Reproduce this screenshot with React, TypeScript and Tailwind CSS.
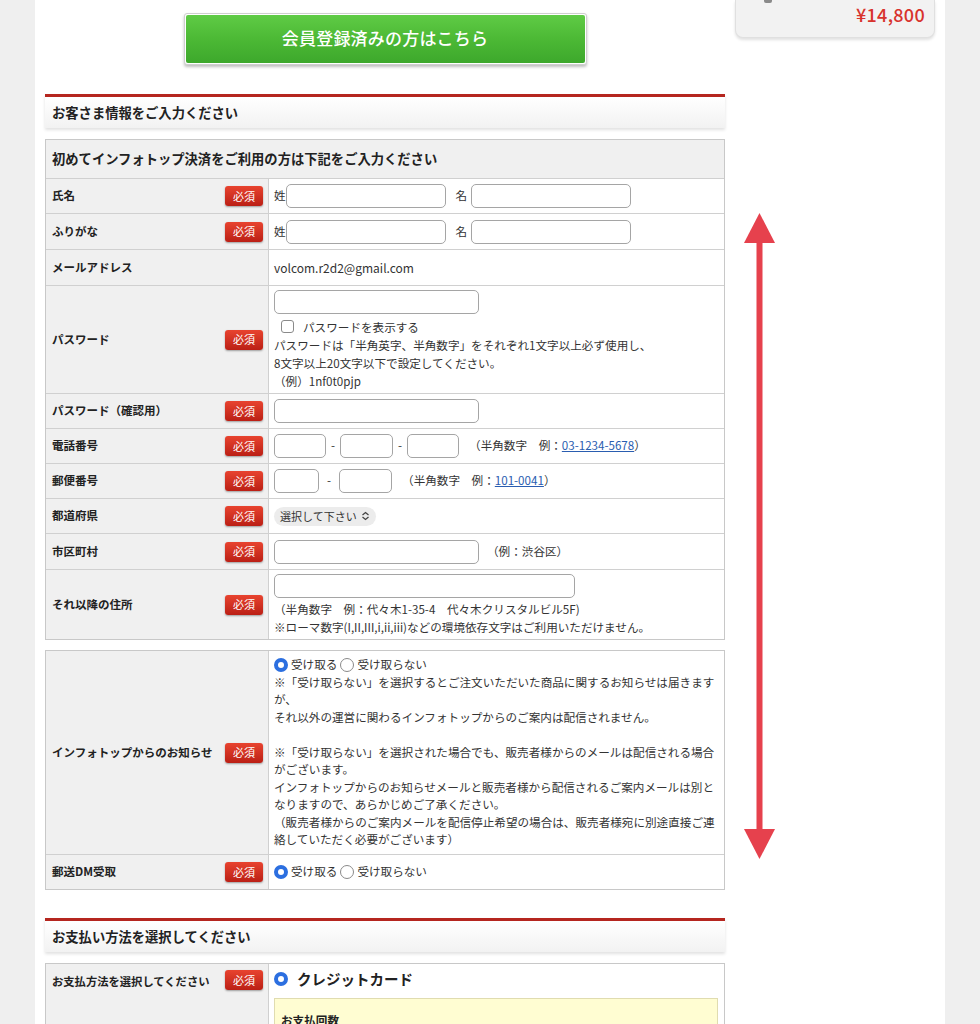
import React from "react";

const jp = { fontFamily: '"Noto Sans CJK JP", "Noto Sans", sans-serif' };

function Badge() {
  return (
    <span className="inline-flex items-center justify-center w-[38px] h-[20px] rounded-[3px] bg-gradient-to-b from-[#e8432f] to-[#bb1f15] text-white text-[11px] shadow-[0_1px_2px_rgba(0,0,0,0.35)] shrink-0">
      必須
    </span>
  );
}

function Input({ className }: { className: string }) {
  return <span className={`inline-block h-[24px] rounded-[5px] border border-[#a5a5a5] bg-white ${className}`} />;
}

function Radio({ checked }: { checked?: boolean }) {
  return checked ? (
    <span className="inline-block w-[14px] h-[14px] rounded-full border-[4px] border-[#2c6fe0] bg-white shrink-0" />
  ) : (
    <span className="inline-block w-[14px] h-[14px] rounded-full border border-[#8a8a8a] bg-white shrink-0" />
  );
}

function Row({
  label,
  h,
  children,
  required = true,
  first,
}: {
  label: string;
  h: string;
  children?: React.ReactNode;
  required?: boolean;
  first?: boolean;
}) {
  return (
    <div className={`flex ${first ? "" : "border-t border-[#d0d0d0]"} ${h}`}>
      <div className="w-[222px] shrink-0 bg-[#f0f0f0] flex items-center justify-between pl-[6px] pr-[5px]">
        <span className="text-[11.5px] font-bold text-[#222]">{label}</span>
        {required && <Badge />}
      </div>
      <div className="flex-1 border-l border-[#d0d0d0] bg-white pl-[5px] flex items-center text-[11.6px] text-[#333]">
        {children}
      </div>
    </div>
  );
}

function SectionHeader({ title }: { title: string }) {
  return (
    <div className="border-t-[3px] border-[#b5261f] h-[34px] bg-gradient-to-b from-white to-[#f2f2f2] shadow-[0_2px_3px_rgba(0,0,0,0.12)] flex items-center pl-[7px]">
      <span className="text-[13.3px] font-bold text-[#222]">{title}</span>
    </div>
  );
}

export default function App() {
  return (
    <div className="min-h-screen bg-[#efefef]" style={jp}>
      <div className="relative ml-[35px] w-[910px] min-h-[1024px] bg-white flex items-start">
        {/* main column */}
        <div className="ml-[10px] w-[680px] pt-[13px]">
          <div className="mx-auto w-[403px] h-[52px] rounded-[3px] border border-[#cfcfcf] bg-white p-[1px] shadow-[0_2px_3px_rgba(0,0,0,0.25)]">
            <div className="h-full rounded-[2px] bg-gradient-to-b from-[#5fcb45] via-[#4cb935] to-[#3da82c] flex items-center justify-center">
              <span className="text-white text-[17px] font-medium tracking-[0.2px] -mt-[2px]">会員登録済みの方はこちら</span>
            </div>
          </div>

          <div className="mt-[29px]">
            <SectionHeader title="お客さま情報をご入力ください" />
          </div>

          <div className="mt-[11px] border border-[#c8c8c8]">
            <div className="h-[38px] bg-[#f0f0f0] flex items-center pl-[6px]">
              <span className="text-[13.3px] font-bold text-[#222]">初めてインフォトップ決済をご利用の方は下記をご入力ください</span>
            </div>
            <Row label="氏名" h="h-[35px]">
              <span>姓</span>
              <Input className="w-[160px]" />
              <span className="ml-[10px] mr-[4px]">名</span>
              <Input className="w-[160px]" />
            </Row>
            <Row label="ふりがな" h="h-[36px]">
              <span>姓</span>
              <Input className="w-[160px]" />
              <span className="ml-[10px] mr-[4px]">名</span>
              <Input className="w-[160px]" />
            </Row>
            <Row label="メールアドレス" h="h-[36px]" required={false}>
              <span className="text-[12px]">volcom.r2d2@gmail.com</span>
            </Row>
            <Row label="パスワード" h="h-[108px]">
              <div className="flex flex-col leading-[18px]">
                <Input className="w-[205px]" />
                <div className="flex items-center mt-[4px] pl-[7px]">
                  <span className="inline-block w-[13px] h-[13px] rounded-[3px] border border-[#8a8a8a] mr-[9px]" />
                  <span>パスワードを表示する</span>
                </div>
                <span>パスワードは「半角英字、半角数字」をそれぞれ1文字以上必ず使用し、</span>
                <span>8文字以上20文字以下で設定してください。</span>
                <span>（例）1nf0t0pjp</span>
              </div>
            </Row>
            <Row label="パスワード（確認用）" h="h-[35px]">
              <Input className="w-[205px]" />
            </Row>
            <Row label="電話番号" h="h-[35px]">
              <Input className="w-[52px]" />
              <span className="mx-[5px]">-</span>
              <Input className="w-[53px]" />
              <span className="mx-[5px]">-</span>
              <Input className="w-[52px]" />
              <span className="ml-[10px]">
                （半角数字　例：<span className="text-[#2a5db0] underline">03-1234-5678</span>）
              </span>
            </Row>
            <Row label="郵便番号" h="h-[35px]">
              <Input className="w-[45px]" />
              <span className="mx-[8px]">-</span>
              <Input className="w-[53px]" />
              <span className="ml-[10px]">
                （半角数字　例：<span className="text-[#2a5db0] underline">101-0041</span>）
              </span>
            </Row>
            <Row label="都道府県" h="h-[35px]">
              <span className="inline-flex items-center h-[19px] rounded-full bg-[#ececec] px-[6px] text-[11px]">
                選択して下さい
                <svg width="9" height="10" viewBox="0 0 9 10" className="ml-[4px]">
                  <path d="M1.5 4 L4.5 1.5 L7.5 4 M1.5 6 L4.5 8.5 L7.5 6" fill="none" stroke="#444" strokeWidth="1.3" />
                </svg>
              </span>
            </Row>
            <Row label="市区町村" h="h-[36px]">
              <Input className="w-[205px]" />
              <span className="ml-[8px]">（例：渋谷区）</span>
            </Row>
            <Row label="それ以降の住所" h="h-[70px]">
              <div className="flex flex-col leading-[18px]">
                <Input className="w-[301px]" />
                <span className="mt-[2px]">（半角数字　例：代々木1-35-4　代々木クリスタルビル5F)</span>
                <span>※ローマ数字(I,II,III,i,ii,iii)などの環境依存文字はご利用いただけません。</span>
              </div>
            </Row>
          </div>

          <div className="mt-[10px] border border-[#c8c8c8]">
            <Row label="インフォトップからのお知らせ" h="h-[203px]" first>
              <div className="flex flex-col leading-[17.5px] whitespace-nowrap">
                <div className="flex items-center gap-[3px]">
                  <Radio checked />
                  <span>受け取る</span>
                  <Radio />
                  <span>受け取らない</span>
                </div>
                <span>※「受け取らない」を選択するとご注文いただいた商品に関するお知らせは届きます</span>
                <span>が、</span>
                <span>それ以外の運営に関わるインフォトップからのご案内は配信されません。</span>
                <span className="h-[17.5px]" />
                <span>※「受け取らない」を選択された場合でも、販売者様からのメールは配信される場合</span>
                <span>がございます。</span>
                <span>インフォトップからのお知らせメールと販売者様から配信されるご案内メールは別と</span>
                <span>なりますので、あらかじめご了承ください。</span>
                <span>（販売者様からのご案内メールを配信停止希望の場合は、販売者様宛に別途直接ご連</span>
                <span>絡していただく必要がございます）</span>
              </div>
            </Row>
            <Row label="郵送DM受取" h="h-[35px]">
              <div className="flex items-center gap-[3px]">
                <Radio checked />
                <span>受け取る</span>
                <Radio />
                <span>受け取らない</span>
              </div>
            </Row>
          </div>

          <div className="mt-[28px]">
            <SectionHeader title="お支払い方法を選択してください" />
          </div>

          <div className="mt-[11px] border border-[#c8c8c8] flex h-[80px]">
            <div className="w-[222px] shrink-0 bg-[#f0f0f0] flex items-start justify-between pl-[6px] pr-[5px] pt-[6px]">
              <span className="text-[11.3px] font-bold text-[#222] mt-[3px]">お支払方法を選択してください</span>
              <Badge />
            </div>
            <div className="flex-1 border-l border-[#d0d0d0] pl-[5px] pr-[6px] pt-[6px]">
              <div className="flex items-center gap-[9px] h-[18px]">
                <Radio checked />
                <span className="text-[14.5px] font-bold text-[#222]">クレジットカード</span>
              </div>
              <div className="mt-[10px] h-[60px] bg-[#fffdd2] border border-[#e0dcb0] pl-[6px] pt-[7px]">
                <span className="text-[11.6px] font-bold text-[#222]">お支払回数</span>
              </div>
            </div>
          </div>
        </div>

        {/* sidebar */}
        <div className="ml-[10px] w-[200px]">
          <div className="relative h-[38px] rounded-b-[8px] bg-[#f2f2f2] border border-t-0 border-[#e0e0e0] shadow-[0_2px_3px_rgba(0,0,0,0.12)] flex items-end justify-end pr-[9px] pb-[14px]">
            <span className="absolute left-[28px] top-0 w-[8px] h-[3px] rounded-b-[2px] bg-[#8a8a8a]" />
            <span className="text-[18px] font-medium text-[#d8332d] leading-none tracking-[0.3px]">¥14,800</span>
          </div>
        </div>

        {/* annotation arrow */}
        <svg className="absolute left-[709px] top-[213px]" width="31" height="646" viewBox="0 0 31 646">
          <polygon points="15.5,0 0,30 31,30" fill="#e6414d" />
          <rect x="12.5" y="29" width="6" height="588" fill="#e6414d" />
          <polygon points="0,616 31,616 15.5,646" fill="#e6414d" />
        </svg>
      </div>
    </div>
  );
}
